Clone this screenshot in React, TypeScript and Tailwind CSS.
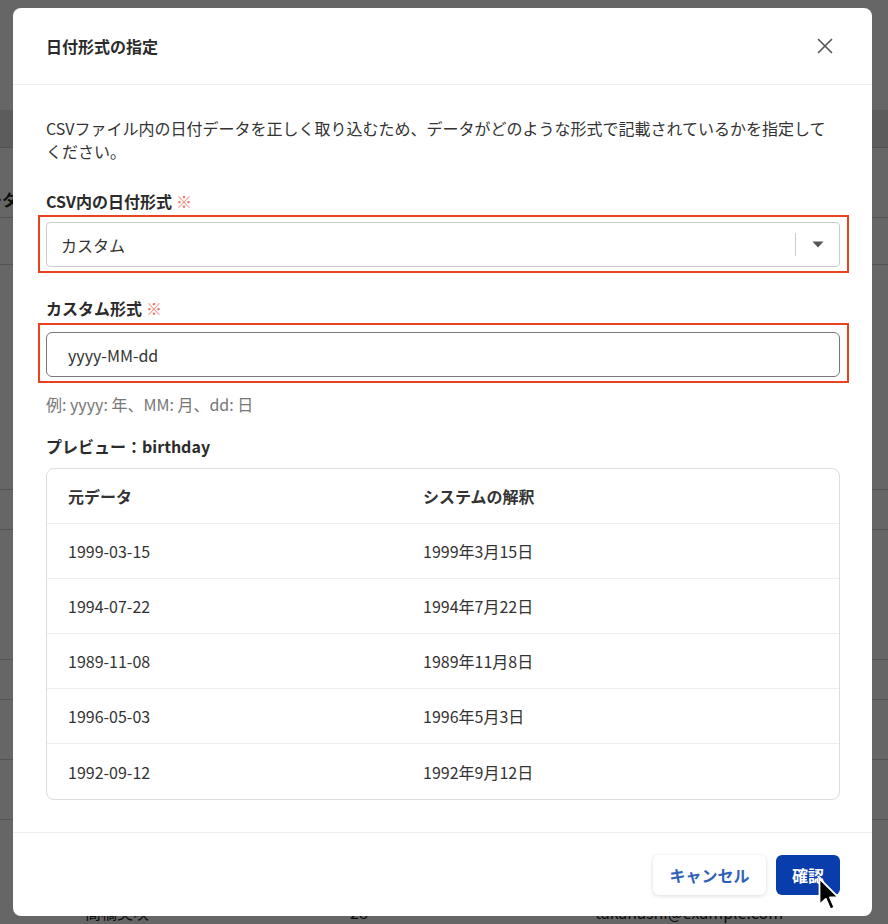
import { X } from 'lucide-react';

const rows = [
  { raw: '1999-03-15', parsed: '1999年3月15日' },
  { raw: '1994-07-22', parsed: '1994年7月22日' },
  { raw: '1989-11-08', parsed: '1989年11月8日' },
  { raw: '1996-05-03', parsed: '1996年5月3日' },
  { raw: '1992-09-12', parsed: '1992年9月12日' },
];

const font = "font-['Noto_Sans_CJK_JP','Noto_Sans',sans-serif]";

// 背景のページ（モーダルの下に見えるテーブル）
const BackgroundPage = () => (
  <div className="h-[924px] overflow-hidden bg-white">
    <div className="h-[110px]" />
    <div className="h-[38px] bg-[#e6e6e6] border-b border-[#d0d0d0]" />
    <div className="flex h-[70px] items-end pb-[6px] border-b border-[#d0d0d0] -ml-[30px]">
      <span className="text-[16px] font-bold text-[#222]">データ</span>
    </div>
    <div className="flex h-[47px] items-center pt-[8px] border-b border-[#d0d0d0] -ml-[10px]">
      <span className="text-[16px] text-[#222]">5</span>
    </div>
    <div className="h-[225px] border-b border-[#d0d0d0]" />
    <div className="h-[40px] border-b border-[#d0d0d0]" />
    <div className="h-[130px] border-b border-[#d0d0d0]" />
    <div className="h-[40px] border-b border-[#d0d0d0]" />
    <div className="h-[60px] border-b border-[#d0d0d0]" />
    <div className="h-[60px] border-b border-[#d0d0d0]" />
    <div className="grid grid-cols-[350px_245px_1fr] pt-[80px] text-[16px] text-[#222]">
      <span className="pl-[85px]">高橋美咲</span>
      <span>28</span>
      <span>takahashi@example.com</span>
    </div>
  </div>
);

const Required = () => <span className="ml-1 text-[#e8776c] font-normal">※</span>;

const Cursor = () => (
  <svg className="absolute left-[818px] top-[877px] h-[36px] w-[24px]" viewBox="0 0 16 24">
    <path d="M1 1 L1 18.5 L5.2 14.6 L8.2 21.6 L11 20.4 L8 13.6 L13.6 13.6 Z" fill="#000" stroke="#fff" strokeWidth="1.2" strokeLinejoin="round" />
  </svg>
);

export default function App() {
  return (
    <div className={`relative h-[924px] w-[888px] overflow-hidden ${font}`}>
      <BackgroundPage />

      {/* オーバーレイ */}
      <div className="absolute inset-0 bg-black/60">
        <div className="ml-[13px] mt-[8px] flex h-[908px] w-[859px] flex-col rounded-[8px] bg-white">
          {/* ヘッダー */}
          <div className="flex h-[77px] items-center justify-between border-b border-[#eeeeee] pl-[33px] pr-[34px]">
            <h2 className="text-[16px] font-bold text-[#2b2b2b]">日付形式の指定</h2>
            <X className="h-[26px] w-[26px] text-[#5a5a5a]" strokeWidth={1.6} />
          </div>

          {/* 本文 */}
          <div className="flex-1 pl-[33px] pr-[32px] pt-[32px] pb-[31px] text-[#333]">
            <p className="text-[16px] leading-[23px]">
              CSVファイル内の日付データを正しく取り込むため、データがどのような形式で記載されているかを指定してください。
            </p>

            <label className="mt-[27px] block text-[16px] font-bold leading-[23px] text-[#2b2b2b]">
              CSV内の日付形式<Required />
            </label>
            <div className="relative mt-[9px]">
              <div className="flex h-[45px] items-center rounded-[4px] border border-[#cccccc] pl-[14px]">
                <span className="flex-1 text-[16px] text-[#333]">カスタム</span>
                <span className="h-[23px] w-px bg-[#cccccc]" />
                <span className="flex w-[43px] justify-center">
                  <svg width="12" height="7" viewBox="0 0 12 7"><path d="M0.5 0.5 L11.5 0.5 L6 6.5 Z" fill="#555" /></svg>
                </span>
              </div>
              <div className="pointer-events-none absolute -left-[8px] -right-[9px] -top-[7px] -bottom-[6px] border-2 border-[#e8431e]" />
            </div>

            <label className="mt-[30px] block text-[16px] font-bold leading-[23px] text-[#2b2b2b]">
              カスタム形式<Required />
            </label>
            <div className="relative mt-[12px]">
              <div className="flex h-[45px] items-center rounded-[6px] border border-[#777777] pl-[21px] text-[16px] text-[#333]">
                yyyy-MM-dd
              </div>
              <div className="pointer-events-none absolute -left-[8px] -right-[9px] -top-[9px] -bottom-[6px] border-2 border-[#e8431e]" />
            </div>

            <p className="mt-[16px] text-[16px] leading-[23px] text-[#777]">例: yyyy: 年、MM: 月、dd: 日</p>

            <h3 className="mt-[19px] text-[16px] font-bold leading-[23px] text-[#2b2b2b]">プレビュー：birthday</h3>

            <div className="mt-[10px] overflow-hidden rounded-[8px] border border-[#dddddd]">
              <div className="grid h-[55px] grid-cols-[355px_1fr] items-center border-b border-[#eeeeee] px-[21px] text-[16px] font-bold text-[#333]">
                <span>元データ</span>
                <span>システムの解釈</span>
              </div>
              {rows.map((r, i) => (
                <div
                  key={r.raw}
                  className={`grid h-[55px] grid-cols-[355px_1fr] items-center px-[21px] text-[16px] text-[#333] ${i < rows.length - 1 ? 'border-b border-[#eeeeee]' : ''}`}
                >
                  <span>{r.raw}</span>
                  <span>{r.parsed}</span>
                </div>
              ))}
            </div>
          </div>

          {/* フッター */}
          <div className="flex h-[84px] items-start justify-end gap-[10px] border-t border-[#eeeeee] pr-[32px] pt-[22px]">
            <button className="h-[40px] w-[113px] rounded-[6px] bg-white text-[16px] font-bold text-[#2f62b6] shadow-[0_1px_4px_rgba(0,0,0,0.15)]">
              キャンセル
            </button>
            <button className="h-[40px] w-[64px] rounded-[6px] bg-[#0a3dac] text-[16px] font-bold text-white">確認</button>
          </div>
        </div>
      </div>

      <Cursor />
    </div>
  );
}
